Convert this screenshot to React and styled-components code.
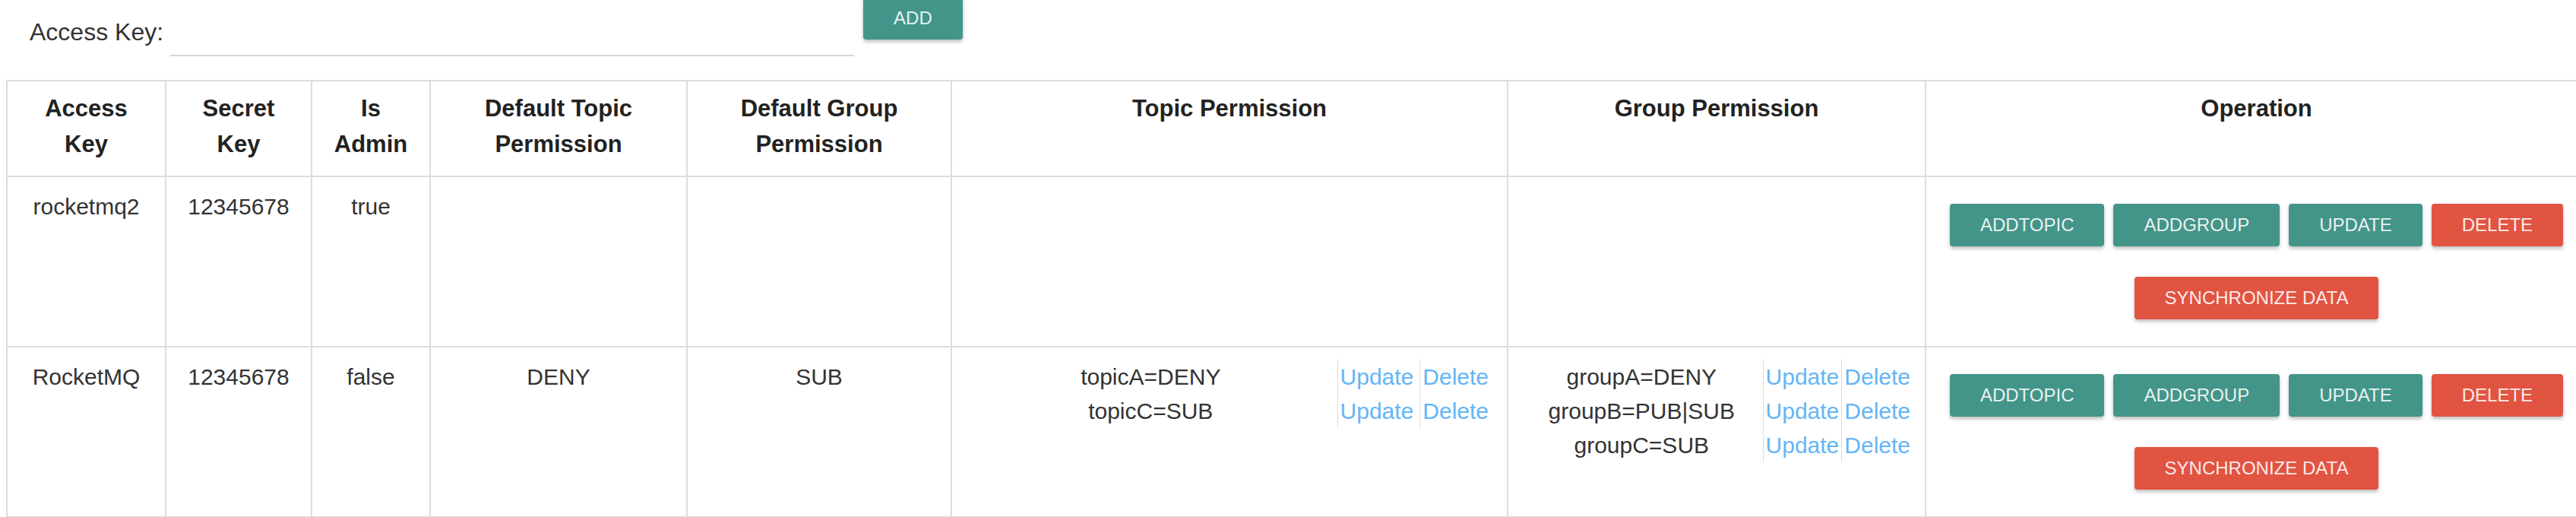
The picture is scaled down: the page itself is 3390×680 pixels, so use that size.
import React from 'react';
import styled, { createGlobalStyle } from 'styled-components';

const GlobalStyle = createGlobalStyle`
  html, body {
    margin: 0;
    overflow: hidden;
    background: #fff;
  }
  body {
    font-family: "Liberation Sans", Arial, sans-serif;
    color: #333;
  }
`;

const columns = [209, 192, 156, 338, 348, 732, 550, 871];

const headers = [
  'Access Key',
  'Secret Key',
  'Is Admin',
  'Default Topic Permission',
  'Default Group Permission',
  'Topic Permission',
  'Group Permission',
  'Operation'
];

const users = [
  {
    accessKey: 'rocketmq2',
    secretKey: '12345678',
    admin: 'true',
    defaultTopic: '',
    defaultGroup: '',
    topics: [],
    groups: []
  },
  {
    accessKey: 'RocketMQ',
    secretKey: '12345678',
    admin: 'false',
    defaultTopic: 'DENY',
    defaultGroup: 'SUB',
    topics: ['topicA=DENY', 'topicC=SUB'],
    groups: ['groupA=DENY', 'groupB=PUB|SUB', 'groupC=SUB']
  }
];

const Page = styled.div`
  padding: 0 8px;
`;

const Toolbar = styled.div`
  display: flex;
  align-items: flex-start;
  height: 105px;
  padding-left: 31px;
`;

const Label = styled.span`
  margin-top: 26px;
  font-size: 32px;
  line-height: 32px;
  color: #333;
`;

const KeyInput = styled.input`
  box-sizing: border-box;
  width: 900px;
  height: 48px;
  margin: 26px 0 0 9px;
  padding: 0 4px;
  border: none;
  border-bottom: 2px solid #d6d6d6;
  background: transparent;
  font-family: inherit;
  font-size: 30px;
  outline: none;
`;

const Button = styled.button`
  height: 56px;
  padding: 0 40px;
  margin: ${p => (p.$lifted ? '-4px 0 0 12px' : '0')};
  border: none;
  border-radius: 4px;
  background: ${p => (p.$danger ? '#e15442' : '#439589')};
  color: rgba(255, 255, 255, 0.9);
  font-family: "Liberation Sans", Arial, sans-serif;
  font-size: 24px;
  text-transform: uppercase;
  white-space: nowrap;
  box-shadow: 0 3px 5px rgba(0, 0, 0, 0.26);
  cursor: pointer;
`;

const Table = styled.table`
  width: 3396px;
  table-layout: fixed;
  border-collapse: collapse;
`;

const Col = styled.col`
  width: ${p => p.$w}px;
`;

const Th = styled.th`
  padding: 12px 20px 18px;
  border: 2px solid #ddd;
  font-size: 31px;
  line-height: 47px;
  font-weight: bold;
  color: #222;
  text-align: center;
  vertical-align: top;
`;

const Td = styled.td`
  padding: 16px;
  border: 2px solid #ddd;
  font-size: 30px;
  line-height: 45px;
  color: #333;
  text-align: center;
  vertical-align: top;
`;

const PermTable = styled.table`
  width: 100%;
  border-collapse: collapse;
`;

const PermName = styled.td`
  padding: 0;
  text-align: center;
  font-size: 30px;
  line-height: 45px;
  color: #333;
  white-space: nowrap;
`;

const PermAction = styled.td`
  width: 1%;
  padding: 0 ${p => (p.$wide ? 8 : 3)}px 0 3px;
  border-left: 1px solid #ddd;
  text-align: left;
  white-space: nowrap;
  font-size: 30px;
  line-height: 45px;
`;

const Link = styled.a`
  color: #64b5f6;
  text-decoration: none;
  cursor: pointer;
`;

const Ops = styled.div`
  display: flex;
  flex-direction: column;
  align-items: center;
  gap: 40px;
  padding: 19px 0;
`;

const ButtonRow = styled.div`
  display: flex;
  justify-content: center;
  gap: 12px;
`;

function Permissions({ items, wide }) {
  if (!items.length) return null;
  return (
    <PermTable>
      <tbody>
        {items.map(item => (
          <tr key={item}>
            <PermName>{item}</PermName>
            <PermAction $wide={wide}><Link>Update</Link></PermAction>
            <PermAction $wide={wide}><Link>Delete</Link></PermAction>
          </tr>
        ))}
      </tbody>
    </PermTable>
  );
}

function App() {
  return (
    <Page>
      <GlobalStyle />
      <Toolbar>
        <Label>Access Key:</Label>
        <KeyInput type="text" />
        <Button $lifted>Add</Button>
      </Toolbar>
      <Table>
        <colgroup>
          {columns.map((w, i) => <Col key={i} $w={w} />)}
        </colgroup>
        <thead>
          <tr>
            {headers.map(h => <Th key={h}>{h}</Th>)}
          </tr>
        </thead>
        <tbody>
          {users.map(user => (
            <tr key={user.accessKey}>
              <Td>{user.accessKey}</Td>
              <Td>{user.secretKey}</Td>
              <Td>{user.admin}</Td>
              <Td>{user.defaultTopic}</Td>
              <Td>{user.defaultGroup}</Td>
              <Td><Permissions items={user.topics} wide /></Td>
              <Td><Permissions items={user.groups} /></Td>
              <Td>
                <Ops>
                  <ButtonRow>
                    <Button>AddTopic</Button>
                    <Button>AddGroup</Button>
                    <Button>Update</Button>
                    <Button $danger>Delete</Button>
                  </ButtonRow>
                  <ButtonRow>
                    <Button $danger>Synchronize Data</Button>
                  </ButtonRow>
                </Ops>
              </Td>
            </tr>
          ))}
        </tbody>
      </Table>
    </Page>
  );
}

export default App;
